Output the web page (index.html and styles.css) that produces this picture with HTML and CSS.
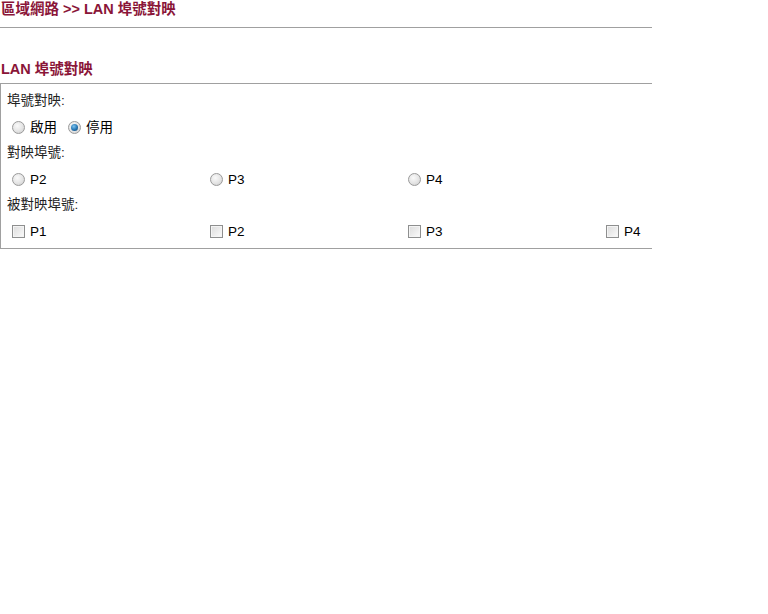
FILE: index.html
```html
<!DOCTYPE html>
<html>
<head>
<meta charset="utf-8">
<link rel="stylesheet" href="styles.css">
</head>
<body>
<div class="crumb">區域網路 &gt;&gt; LAN 埠號對映</div>
<div class="section-title">LAN 埠號對映</div>
<div class="box">
  <div class="label-row">埠號對映:</div>
  <div class="ctrl-row">
    <label class="opt"><span class="radio"></span>啟用</label>
    <label class="opt"><span class="radio checked"></span>停用</label>
  </div>
  <div class="label-row">對映埠號:</div>
  <div class="ctrl-row grid">
    <label class="opt"><span class="radio"></span>P2</label>
    <label class="opt"><span class="radio"></span>P3</label>
    <label class="opt"><span class="radio"></span>P4</label>
  </div>
  <div class="label-row">被對映埠號:</div>
  <div class="ctrl-row grid">
    <label class="opt"><span class="check"></span>P1</label>
    <label class="opt"><span class="check"></span>P2</label>
    <label class="opt"><span class="check"></span>P3</label>
    <label class="opt"><span class="check"></span>P4</label>
  </div>
</div>
</body>
</html>
```
FILE: styles.css
```css
html, body {
  margin: 0;
  padding: 0;
  background: #fff;
}
body {
  font-family: "Liberation Sans", "Noto Sans CJK TC", sans-serif;
  font-size: 13.5px;
  color: #000;
}
.crumb {
  width: 652px;
  height: 28px;
  box-sizing: border-box;
  padding: 0 0 0 1px;
  line-height: 18px;
  font-size: 14.5px;
  font-weight: bold;
  color: #8a1538;
  border-bottom: 1px solid #a0a0a0;
}
.section-title {
  margin-top: 32px;
  padding-left: 1px;
  height: 23px;
  line-height: 18px;
  font-size: 14.5px;
  font-weight: bold;
  color: #8a1538;
}
.box {
  width: 652px;
  box-sizing: border-box;
  border-top: 1px solid #a0a0a0;
  border-left: 1px solid #a0a0a0;
  border-bottom: 1px solid #a0a0a0;
  padding: 5px 0 3px 6px;
}
.label-row {
  height: 24px;
  line-height: 24px;
  color: #222;
}
.ctrl-row {
  height: 28px;
  display: flex;
  align-items: center;
  gap: 11px;
  padding-left: 5px;
  padding-top: 1px;
  box-sizing: border-box;
}
.ctrl-row.grid {
  display: grid;
  grid-template-columns: repeat(4, 198px);
  gap: 0;
}
.opt {
  display: flex;
  align-items: center;
  gap: 5px;
  line-height: 16px;
}
.radio {
  width: 11px;
  height: 11px;
  border-radius: 50%;
  border: 1px solid #9a9a9a;
  background: radial-gradient(circle at 40% 35%, #fafafa 0%, #e4e4e4 55%, #c8c8c8 100%);
  box-sizing: content-box;
  position: relative;
}
.radio.checked::after {
  content: "";
  position: absolute;
  left: 2px;
  top: 2px;
  width: 7px;
  height: 7px;
  border-radius: 50%;
  background: radial-gradient(circle at 40% 35%, #7fc4ee 0%, #2a7bb8 50%, #0c3f6a 100%);
}
.check {
  width: 11px;
  height: 11px;
  border: 1px solid #8e8f8f;
  background: linear-gradient(135deg, #dcdcdc 0%, #eeeeee 60%, #fbfbfb 100%);
  box-shadow: inset 0 0 0 1px #f4f4f4;
}
```
